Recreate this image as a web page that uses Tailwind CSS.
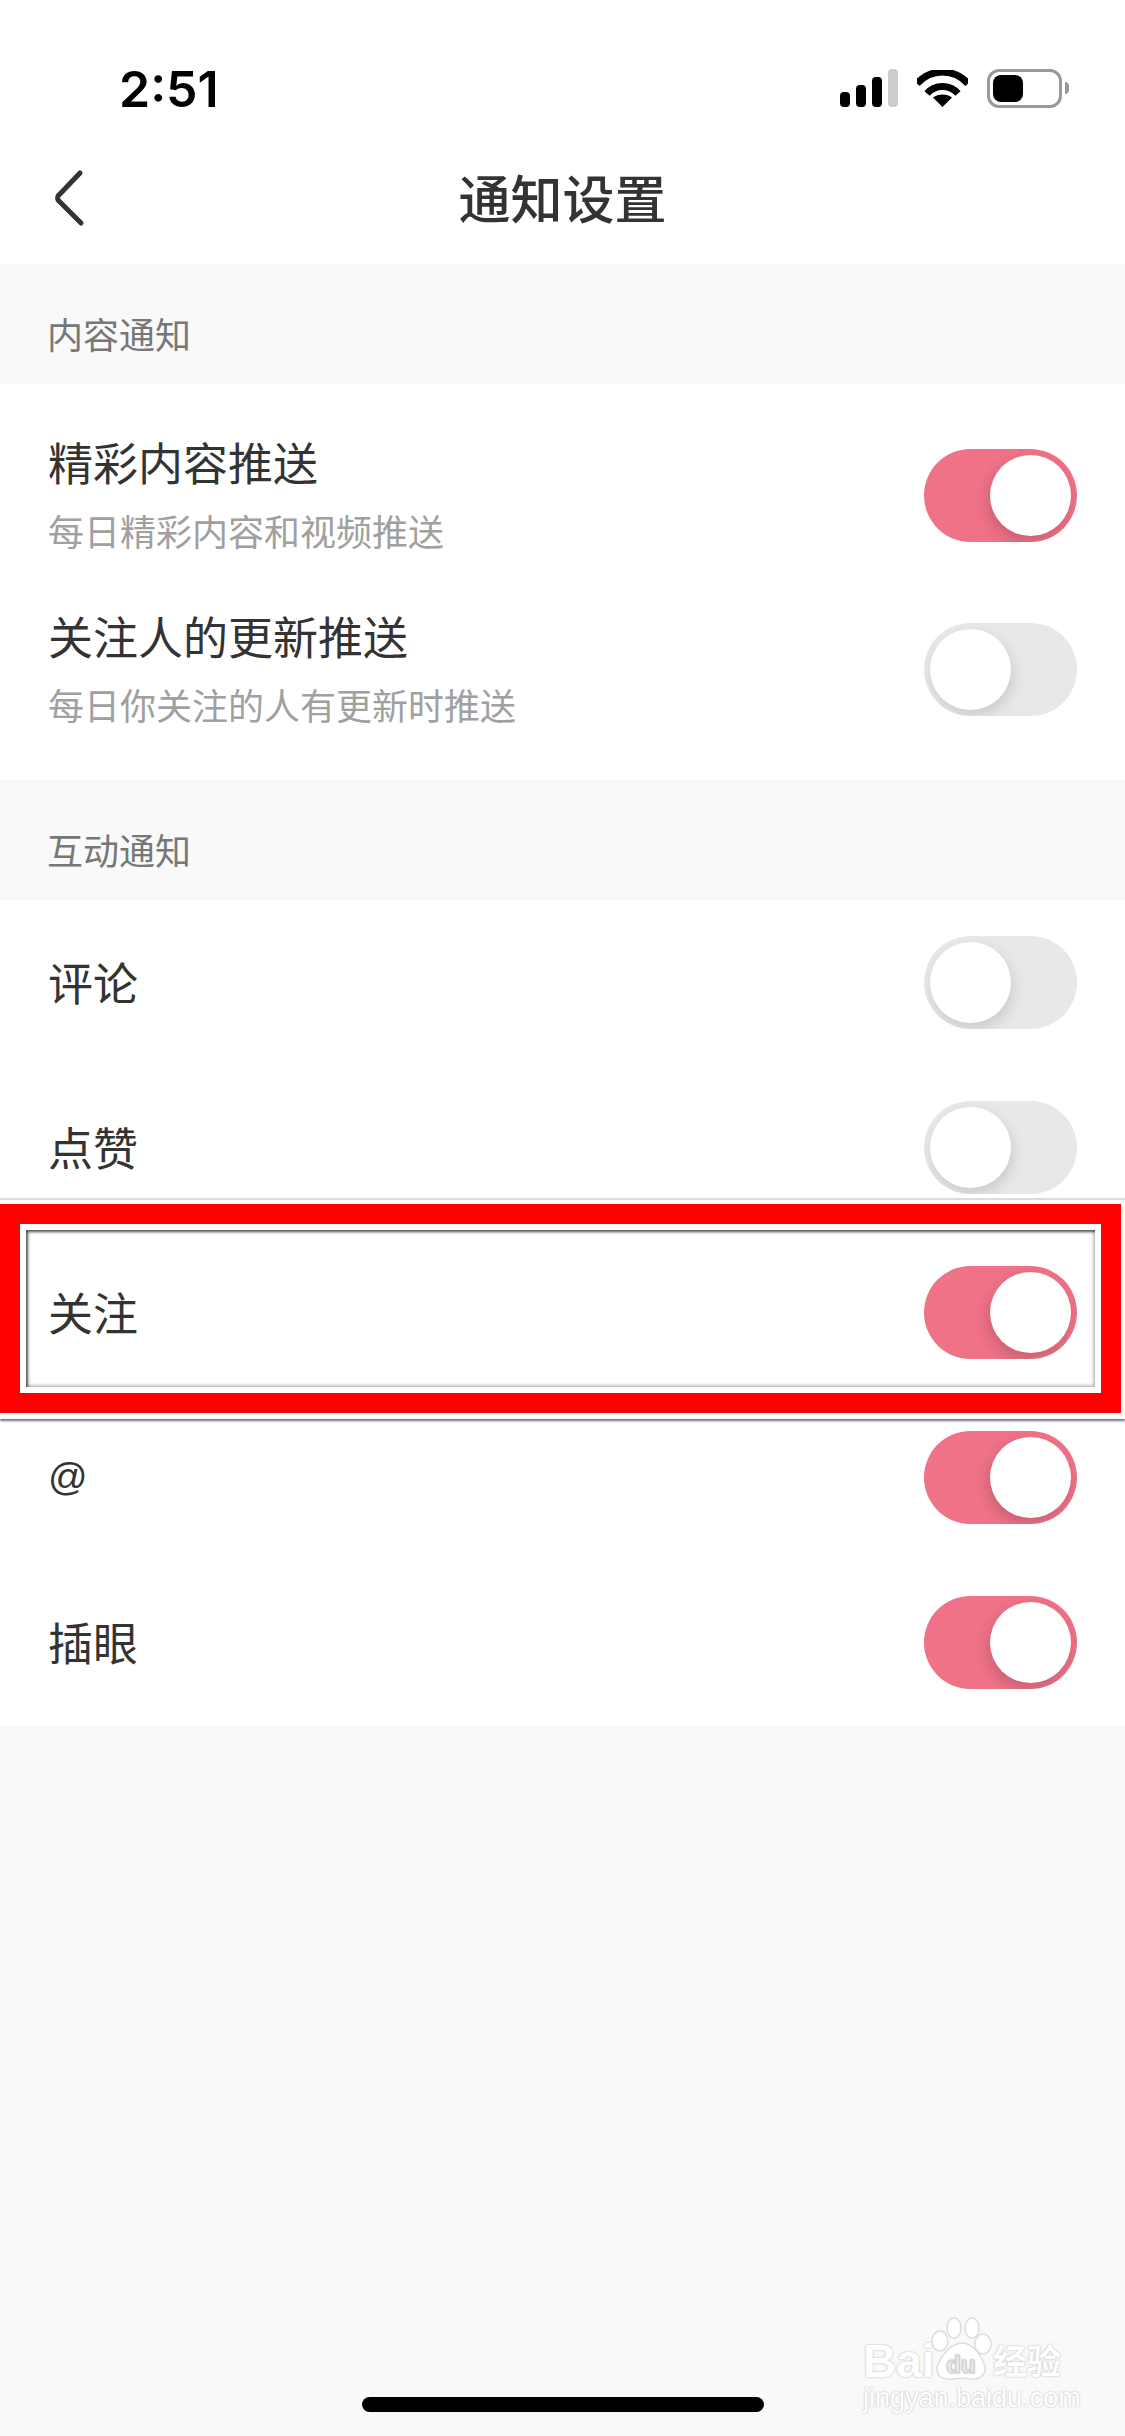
<!DOCTYPE html>
<html lang="zh-CN">
<head>
  <meta charset="UTF-8">
  <meta name="viewport" content="width=device-width, initial-scale=1.0">
  <title>通知设置</title>
  <script src="https://cdn.jsdelivr.net/npm/@tailwindcss/browser@4"></script>
</head>
<body class="bg-[#f9f9f9] font-['Liberation_Sans','Noto_Sans_CJK_SC',sans-serif]">
<div class="relative w-[1125px] h-[2436px] overflow-hidden bg-[#f9f9f9]">

  <!-- Status bar -->
  <div class="h-[132px] bg-white pt-[44px] pl-[119px] pr-[56px] flex items-center justify-between">
    <span class="pt-[2px] font-['Inter',sans-serif] font-semibold text-[50px] leading-none text-black">2:51</span>
    <div class="flex items-center">
      <svg width="58" height="38" viewBox="0 0 58 38" class="mr-[19px]">
        <rect x="0" y="23" width="10" height="15" rx="4" fill="#000"/>
        <rect x="16" y="16" width="10" height="22" rx="4" fill="#000"/>
        <rect x="32" y="8" width="10" height="30" rx="4" fill="#000"/>
        <rect x="48" y="0" width="10" height="38" rx="4" fill="#ccc"/>
      </svg>
      <svg width="51" height="37" viewBox="0 0 51 37" class="mr-[19px]">
        <path d="M0 14.5C7 7 15.500 3 25.500 3S44 7 51 14.500" transform="translate(0 -1)" fill="none" stroke="#000" stroke-width="7"/>
        <path d="M10 23.500C14 19 19 16.500 25.500 16.500S37 19 41 23.500" fill="none" stroke="#000" stroke-width="7"/>
        <path d="M16 27.500C18.500 25.500 22 24.500 25.500 24.500S32.500 25.500 35 27.500L25.500 37Z" fill="#000"/>
      </svg>
      <div class="w-[75px] h-[39px] rounded-[12px] border-[3px] border-[#999] p-[3px]">
        <div class="w-[30px] h-full rounded-[8px] bg-black"></div>
      </div>
      <div class="w-[4px] h-[12px] ml-[3px] rounded-r-full bg-[#999]"></div>
    </div>
  </div>

  <!-- Nav bar -->
  <div class="relative h-[132px] bg-white flex items-center justify-center">
    <svg width="40" height="60" viewBox="0 0 40 60" class="absolute left-[50px] top-[36px]">
      <path d="M30 5L8 28Q7 30 8 32L31 55" fill="none" stroke="#333" stroke-width="5" stroke-linecap="round"/>
    </svg>
    <h1 class="pt-[5px] text-[52px] leading-none font-medium text-[#333]">通知设置</h1>
  </div>

  <!-- 内容通知 -->
  <div class="h-[120px] pt-[26px] pl-[47px] flex items-center text-[36px] text-[#777]">内容通知</div>
  <div class="bg-white py-[24px] pl-[48px] pr-[48px]">
    <div class="h-[174px] flex items-center justify-between">
      <div class="pt-[6px]">
        <div class="text-[45px] leading-[56px] text-[#333]">精彩内容推送</div>
        <div class="mt-[16px] text-[36px] leading-[48px] text-[#a0a0a0]">每日精彩内容和视频推送</div>
      </div>
      <div class="relative w-[153px] h-[93px] rounded-full overflow-hidden bg-[#ef7287]">
        <div class="absolute top-[6px] left-[66px] w-[81px] h-[81px] rounded-full bg-white shadow-[-2px_6px_14px_rgba(0,0,0,0.16)]"></div>
      </div>
    </div>
    <div class="h-[174px] flex items-center justify-between">
      <div class="pt-[6px]">
        <div class="text-[45px] leading-[56px] text-[#333]">关注人的更新推送</div>
        <div class="mt-[16px] text-[36px] leading-[48px] text-[#a0a0a0]">每日你关注的人有更新时推送</div>
      </div>
      <div class="relative w-[153px] h-[93px] rounded-full overflow-hidden bg-[#e8e8e8]">
        <div class="absolute top-[6px] left-[6px] w-[81px] h-[81px] rounded-full bg-white shadow-[2px_6px_14px_rgba(0,0,0,0.13)]"></div>
      </div>
    </div>
  </div>

  <!-- 互动通知 -->
  <div class="h-[120px] pt-[26px] pl-[47px] flex items-center text-[36px] text-[#777]">互动通知</div>
  <div class="bg-white pl-[48px] pr-[48px]">
    <div class="h-[165px] flex items-center justify-between">
      <span class="pt-[6px] text-[45px] text-[#333]">评论</span>
      <div class="relative w-[153px] h-[93px] rounded-full overflow-hidden bg-[#e8e8e8]">
        <div class="absolute top-[6px] left-[6px] w-[81px] h-[81px] rounded-full bg-white shadow-[2px_6px_14px_rgba(0,0,0,0.13)]"></div>
      </div>
    </div>
    <div class="h-[165px] flex items-center justify-between">
      <span class="pt-[6px] text-[45px] text-[#333]">点赞</span>
      <div class="relative w-[153px] h-[93px] rounded-full overflow-hidden bg-[#e8e8e8]">
        <div class="absolute top-[6px] left-[6px] w-[81px] h-[81px] rounded-full bg-white shadow-[2px_6px_14px_rgba(0,0,0,0.13)]"></div>
      </div>
    </div>
    <div class="h-[165px] flex items-center justify-between">
      <span class="pt-[6px] text-[45px] text-[#333]">关注</span>
      <div class="relative w-[153px] h-[93px] rounded-full overflow-hidden bg-[#ef7287]">
        <div class="absolute top-[6px] left-[66px] w-[81px] h-[81px] rounded-full bg-white shadow-[-2px_6px_14px_rgba(0,0,0,0.16)]"></div>
      </div>
    </div>
    <div class="h-[165px] flex items-center justify-between">
      <span class="text-[39px] text-[#333]">@</span>
      <div class="relative w-[153px] h-[93px] rounded-full overflow-hidden bg-[#ef7287]">
        <div class="absolute top-[6px] left-[66px] w-[81px] h-[81px] rounded-full bg-white shadow-[-2px_6px_14px_rgba(0,0,0,0.16)]"></div>
      </div>
    </div>
    <div class="h-[165px] flex items-center justify-between">
      <span class="pt-[6px] text-[45px] text-[#333]">插眼</span>
      <div class="relative w-[153px] h-[93px] rounded-full overflow-hidden bg-[#ef7287]">
        <div class="absolute top-[6px] left-[66px] w-[81px] h-[81px] rounded-full bg-white shadow-[-2px_6px_14px_rgba(0,0,0,0.16)]"></div>
      </div>
    </div>
  </div>

  <!-- Red annotation frame over the 关注 row -->
  <div class="absolute left-0 right-0 top-[1198px] h-[221px] pt-[4px] pb-[6px] pr-[4px] border-t-[2px] border-t-[#dcdcdc] shadow-[0_2px_2px_rgba(70,70,70,0.75)] pointer-events-none">
    <div class="h-full border-[20px] border-[#ff0000]">
      <div class="h-full border-[6px] border-white">
        <div class="h-full shadow-[inset_2px_2px_3px_rgba(60,60,60,0.9),inset_-2px_-2px_3px_rgba(170,170,170,0.7)]"></div>
      </div>
    </div>
  </div>

  <!-- Watermark -->
  <div class="absolute left-[863px] top-[2317px] w-[205px] h-[95px] text-white [text-shadow:0_0_2px_#aaa]">
    <svg width="70" height="66" viewBox="0 0 70 66" class="absolute left-[64px] top-0">
      <g fill="#fff" stroke="#ddd" stroke-width="1.500">
        <ellipse cx="13" cy="24" rx="8" ry="10"/>
        <ellipse cx="27" cy="11" rx="7" ry="10"/>
        <ellipse cx="45" cy="11" rx="7" ry="10"/>
        <ellipse cx="56" cy="27" rx="8" ry="10"/>
        <path d="M35 26C45 26 55 38 58 50C59 60 50 63 44 62C38 61 31 61 25 62C17 63 9 60 10 50C14 38 25 26 35 26Z"/>
      </g>
      <text x="34" y="56" text-anchor="middle" font-size="24" font-weight="700" fill="#f2f2f2" stroke="#ccc" stroke-width="0.500">du</text>
    </svg>
    <span class="absolute left-0 top-[22px] text-[46px] leading-[44px] font-bold">Bai</span>
    <span class="absolute left-[130px] top-[25px] text-[34px] leading-[40px] font-bold">经验</span>
    <span class="absolute left-0 top-[66px] text-[27px] leading-[30px] whitespace-nowrap">jingyan.baidu.com</span>
  </div>

  <!-- Home indicator -->
  <div class="absolute left-[362px] top-[2397px] w-[402px] h-[15px] rounded-full bg-black"></div>
</div>
</body>
</html>
